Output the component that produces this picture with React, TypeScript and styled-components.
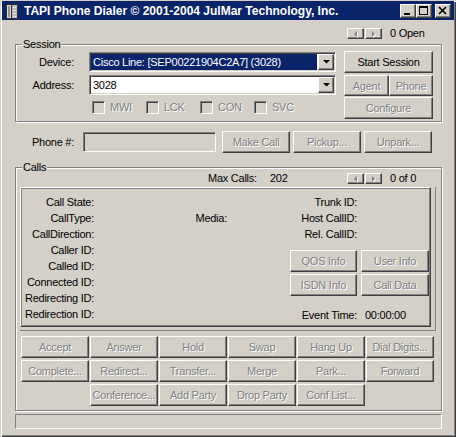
import React from "react";
import styled, { createGlobalStyle, css } from "styled-components";

const FACE = "#D4D0C8";

const GlobalStyle = createGlobalStyle`
  html, body { margin: 0; padding: 0; background: ${FACE}; }
  body {
    font-family: "Liberation Sans", Arial, sans-serif;
    font-size: 11px;
    letter-spacing: -0.25px;
    color: #000;
  }
  *, *::before, *::after { box-sizing: border-box; }
`;

const raised = css`
  background: ${FACE};
  border: 1px solid;
  border-color: #fff #404040 #404040 #fff;
  box-shadow: inset -1px -1px 0 #808080;
`;

const sunken = css`
  border: 1px solid;
  border-color: #808080 #fff #fff #808080;
  box-shadow: inset 1px 1px 0 #404040, inset -1px -1px 0 ${FACE};
`;

const disabledText = css`
  color: #808080;
  text-shadow: 1px 1px 0 #fff;
`;

const Window = styled.div`
  width: 456px;
  height: 437px;
  background: ${FACE};
  padding: 1px 2px 2px 2px;
  box-shadow: inset 1px 1px 0 ${FACE}, inset 2px 2px 0 #fff,
    inset -1px -1px 0 #404040, inset -2px -2px 0 #808080;
  display: flex;
  flex-direction: column;
  overflow: hidden;
`;

const TitleBar = styled.div`
  flex: none;
  height: 19px;
  background: #0a246a;
  color: #fff;
  display: flex;
  align-items: center;
  padding: 0 3px 0 2px;
`;

const TitleText = styled.span`
  flex: 1;
  margin-left: 4px;
  font-weight: bold;
  font-size: 12px;
  letter-spacing: 0;
  white-space: nowrap;
  overflow: hidden;
`;

const CaptionButton = styled.div<{ $gap?: number }>`
  ${raised};
  width: 16px;
  height: 14px;
  margin-left: ${(p) => p.$gap ?? 0}px;
  display: flex;
  align-items: center;
  justify-content: center;
`;

const Content = styled.div`
  display: flex;
  flex-direction: column;
  padding: 0 12px 0 13px;
`;

const NavRow = styled.div`
  height: 11px;
  margin-top: 8px;
  padding-left: 332px;
  display: flex;
`;

const NavCluster = styled.div`
  display: flex;
  align-items: center;
  height: 11px;
`;

const NavArrow = styled.div`
  ${raised};
  width: 17px;
  height: 11px;
  display: flex;
  align-items: center;
  justify-content: center;
  & + & {
    margin-left: 1px;
  }
`;

const NavText = styled.span`
  margin-left: 8px;
  line-height: 11px;
  white-space: nowrap;
`;

const GroupBox = styled.div<{ $h: number; $mt: number }>`
  position: relative;
  flex: none;
  height: ${(p) => p.$h}px;
  margin-top: ${(p) => p.$mt}px;
  border: 1px solid #808080;
  box-shadow: inset 1px 1px 0 #fff, 1px 1px 0 #fff;
`;

const Legend = styled.span`
  position: absolute;
  top: -7px;
  left: 6px;
  padding: 0 1px;
  line-height: 13px;
  background: ${FACE};
`;

const SessionBody = styled.div`
  display: flex;
  padding-top: 6px;
`;

const LeftBlock = styled.div`
  display: flex;
  flex-direction: column;
`;

const RightBlock = styled.div`
  display: flex;
  flex-direction: column;
  width: 89px;
  margin-left: 8px;
`;

const FieldRow = styled.div<{ $mt?: number }>`
  display: flex;
  align-items: center;
  height: 22px;
  margin-top: ${(p) => p.$mt ?? 0}px;
`;

const FieldLabel = styled.span<{ $w: number; $mr: number }>`
  flex: none;
  width: ${(p) => p.$w}px;
  margin-right: ${(p) => p.$mr}px;
  text-align: right;
  white-space: nowrap;
`;

const Combo = styled.div`
  ${sunken};
  background: #fff;
  width: 247px;
  height: 20px;
  padding: 1px;
  display: flex;
`;

const ComboText = styled.div<{ $selected?: boolean }>`
  flex: 1;
  margin-right: 1px;
  padding-left: 2px;
  line-height: 16px;
  white-space: nowrap;
  overflow: hidden;
  background: ${(p) => (p.$selected ? "#0a246a" : "#fff")};
  color: ${(p) => (p.$selected ? "#fff" : "#000")};
`;

const DropButton = styled.div`
  ${raised};
  width: 16px;
  height: 16px;
  flex: none;
  display: flex;
  align-items: center;
  justify-content: center;
`;

const CheckRow = styled.div`
  display: flex;
  height: 13px;
  margin-top: 5px;
  padding-left: 76px;
`;

const CheckItem = styled.div`
  width: 54px;
  display: flex;
  align-items: center;
  gap: 5px;
`;

const CheckBox = styled.span`
  ${sunken};
  width: 13px;
  height: 13px;
  flex: none;
  background: ${FACE};
`;

const DimText = styled.span`
  ${disabledText};
  line-height: 13px;
`;

const PushButton = styled.button<{ $w?: number; $h?: number }>`
  ${raised};
  width: ${(p) => (p.$w ? `${p.$w}px` : "100%")};
  height: ${(p) => p.$h ?? 22}px;
  flex: none;
  padding: 0;
  margin: 0;
  font: inherit;
  letter-spacing: inherit;
  color: #000;
  display: flex;
  align-items: center;
  justify-content: center;
  white-space: nowrap;
  outline: none;
  appearance: none;
  &:disabled {
    ${disabledText};
  }
`;

const ButtonPair = styled.div`
  display: flex;
  margin-top: 2px;
`;

const PhoneRow = styled.div`
  display: flex;
  align-items: center;
  height: 22px;
  margin-top: 9px;
  gap: 3px;
`;

const PhoneInput = styled.div`
  ${sunken};
  background: ${FACE};
  width: 133px;
  height: 20px;
  margin-right: 3px;
  flex: none;
`;

const CallsHeader = styled.div`
  display: grid;
  grid-template-columns: 192px 62px 77px auto;
  height: 11px;
  margin-top: 5px;
  line-height: 11px;
`;

const PanelFrame = styled.div`
  margin: 3px 0 0 4px;
  width: 416px;
  height: 144px;
  padding: 0 4px 3px 0;
  border-right: 1px solid #808080;
  border-bottom: 1px solid #808080;
  display: flex;
`;

const Panel = styled.div`
  flex: 1;
  border: 1px solid;
  border-color: #fff #404040 #404040 #fff;
  box-shadow: inset 1px 1px 0 #808080, inset -1px -1px 0 #808080;
  display: flex;
  padding: 6px 0 0 1px;
  line-height: 16px;
`;

const LabelColumn = styled.div<{ $w: number }>`
  width: ${(p) => p.$w}px;
  flex: none;
  display: flex;
  flex-direction: column;
  text-align: right;
  white-space: nowrap;
`;

const Spacer = styled.div`
  height: 16px;
`;

const RightColumn = styled.div`
  flex: 1;
  display: flex;
  flex-direction: column;
`;

const InfoRow = styled.div<{ $mt?: number }>`
  display: grid;
  grid-template-columns: 130px 1fr;
  column-gap: 8px;
  height: 16px;
  margin-top: ${(p) => p.$mt ?? 0}px;
  white-space: nowrap;
`;

const InfoLabel = styled.span`
  text-align: right;
`;

const InfoButtons = styled.div`
  display: grid;
  grid-template-columns: 67px 68px;
  grid-auto-rows: 22px;
  column-gap: 4px;
  row-gap: 2px;
  margin: 8px 0 0 63px;
`;

const ActionGrid = styled.div`
  display: grid;
  grid-template-columns: repeat(6, 68px);
  grid-auto-rows: 22px;
  column-gap: 1px;
  row-gap: 2px;
  margin: 5px 0 0 5px;
`;

const GridCell = styled.div<{ $col?: number }>`
  display: flex;
  ${(p) => (p.$col ? `grid-column-start: ${p.$col};` : "")}
`;

const StatusBar = styled.div`
  flex: none;
  width: 427px;
  height: 15px;
  margin-top: 3px;
  border: 1px solid;
  border-color: #808080 #fff #fff #808080;
`;

const PhoneIcon = () => (
  <svg width="16" height="16" viewBox="0 0 16 16">
    <rect x="2" y="1" width="12" height="15" fill="#303030" />
    <rect x="3" y="2" width="4" height="13" fill="#d8d8d8" />
    <rect x="4" y="3" width="2" height="11" fill="#909090" />
    <rect x="8" y="2" width="5" height="13" fill="#b8b8b8" />
    {[4, 7, 10, 13].map((y) =>
      [9, 11].map((x) => (
        <rect key={`${x}-${y}`} x={x} y={y} width="1" height="1" fill="#fff" />
      ))
    )}
  </svg>
);

const MinGlyph = () => (
  <svg width="14" height="12" viewBox="0 0 14 12">
    <rect x="3" y="8" width="6" height="2" fill="#000" />
  </svg>
);

const MaxGlyph = () => (
  <svg width="14" height="12" viewBox="0 0 14 12">
    <rect x="2.5" y="1.5" width="8" height="8" fill="none" stroke="#000" />
    <rect x="2" y="1" width="9" height="2" fill="#000" />
  </svg>
);

const CloseGlyph = () => (
  <svg width="14" height="12" viewBox="0 0 14 12">
    <path d="M3 2 L10 9 M10 2 L3 9" stroke="#000" strokeWidth="1.7" />
  </svg>
);

const DropGlyph = () => (
  <svg width="7" height="4" viewBox="0 0 7 4">
    <path d="M0 0 H7 L3.5 3.5 Z" fill="#000" />
  </svg>
);

const ArrowGlyph = ({ dir }: { dir: "left" | "right" }) => {
  const d = dir === "left" ? "M3 0 V6 L0 3 Z" : "M0 0 V6 L3 3 Z";
  return (
    <svg width="5" height="8" viewBox="0 0 5 8">
      <path d={d} transform="translate(2 2)" fill="#fff" />
      <path d={d} transform="translate(1 1)" fill="#808080" />
    </svg>
  );
};

const Nav = ({ text }: { text: string }) => (
  <NavCluster>
    <NavArrow>
      <ArrowGlyph dir="left" />
    </NavArrow>
    <NavArrow>
      <ArrowGlyph dir="right" />
    </NavArrow>
    <NavText>{text}</NavText>
  </NavCluster>
);

const checks = ["MWI", "LCK", "CON", "SVC"];

const leftLabels = [
  "Call State:",
  "CallType:",
  "CallDirection:",
  "Caller ID:",
  "Called ID:",
  "Connected ID:",
  "Redirecting ID:",
  "Redirection ID:",
];

const actionRows: { label: string; col?: number }[] = [
  { label: "Accept" },
  { label: "Answer" },
  { label: "Hold" },
  { label: "Swap" },
  { label: "Hang Up" },
  { label: "Dial Digits..." },
  { label: "Complete..." },
  { label: "Redirect..." },
  { label: "Transfer..." },
  { label: "Merge" },
  { label: "Park..." },
  { label: "Forward" },
  { label: "Conference...", col: 2 },
  { label: "Add Party" },
  { label: "Drop Party" },
  { label: "Conf List..." },
];

export default function App() {
  return (
    <>
      <GlobalStyle />
      <Window>
        <TitleBar>
          <PhoneIcon />
          <TitleText>TAPI Phone Dialer © 2001-2004 JulMar Technology, Inc.</TitleText>
          <CaptionButton>
            <MinGlyph />
          </CaptionButton>
          <CaptionButton>
            <MaxGlyph />
          </CaptionButton>
          <CaptionButton $gap={3}>
            <CloseGlyph />
          </CaptionButton>
        </TitleBar>

        <Content>
          <NavRow>
            <Nav text="0 Open" />
          </NavRow>

          <GroupBox $h={78} $mt={5}>
            <Legend>Session</Legend>
            <SessionBody>
              <LeftBlock>
                <FieldRow>
                  <FieldLabel $w={58} $mr={15}>Device:</FieldLabel>
                  <Combo>
                    <ComboText $selected>Cisco Line: [SEP00221904C2A7] (3028)</ComboText>
                    <DropButton>
                      <DropGlyph />
                    </DropButton>
                  </Combo>
                </FieldRow>
                <FieldRow $mt={1}>
                  <FieldLabel $w={58} $mr={15}>Address:</FieldLabel>
                  <Combo>
                    <ComboText>3028</ComboText>
                    <DropButton>
                      <DropGlyph />
                    </DropButton>
                  </Combo>
                </FieldRow>
                <CheckRow>
                  {checks.map((c) => (
                    <CheckItem key={c}>
                      <CheckBox />
                      <DimText>{c}</DimText>
                    </CheckItem>
                  ))}
                </CheckRow>
              </LeftBlock>
              <RightBlock>
                <PushButton>Start Session</PushButton>
                <ButtonPair>
                  <PushButton $w={45} $h={21} disabled>
                    Agent
                  </PushButton>
                  <PushButton $w={44} $h={21} disabled>
                    Phone
                  </PushButton>
                </ButtonPair>
                <FieldRow $mt={1}>
                  <PushButton disabled>Configure</PushButton>
                </FieldRow>
              </RightBlock>
            </SessionBody>
          </GroupBox>

          <PhoneRow>
            <FieldLabel $w={59} $mr={6}>Phone #:</FieldLabel>
            <PhoneInput />
            <PushButton $w={68} disabled>
              Make Call
            </PushButton>
            <PushButton $w={68} disabled>
              Pickup...
            </PushButton>
            <PushButton $w={68} disabled>
              Unpark...
            </PushButton>
          </PhoneRow>

          <GroupBox $h={244} $mt={14}>
            <Legend>Calls</Legend>
            <CallsHeader>
              <span />
              <span>Max Calls:</span>
              <span>202</span>
              <Nav text="0 of 0" />
            </CallsHeader>

            <PanelFrame>
              <Panel>
                <LabelColumn $w={72}>
                  {leftLabels.map((l) => (
                    <span key={l}>{l}</span>
                  ))}
                </LabelColumn>
                <LabelColumn $w={133}>
                  <Spacer />
                  <span>Media:</span>
                </LabelColumn>
                <RightColumn>
                  <InfoRow>
                    <InfoLabel>Trunk ID:</InfoLabel>
                    <span />
                  </InfoRow>
                  <InfoRow>
                    <InfoLabel>Host CallID:</InfoLabel>
                    <span />
                  </InfoRow>
                  <InfoRow>
                    <InfoLabel>Rel. CallID:</InfoLabel>
                    <span />
                  </InfoRow>
                  <InfoButtons>
                    <PushButton disabled>QOS Info</PushButton>
                    <PushButton disabled>User Info</PushButton>
                    <PushButton disabled>ISDN Info</PushButton>
                    <PushButton disabled>Call Data</PushButton>
                  </InfoButtons>
                  <InfoRow $mt={11}>
                    <InfoLabel>Event Time:</InfoLabel>
                    <span>00:00:00</span>
                  </InfoRow>
                </RightColumn>
              </Panel>
            </PanelFrame>

            <ActionGrid>
              {actionRows.map((a) => (
                <GridCell key={a.label} $col={a.col}>
                  <PushButton disabled>{a.label}</PushButton>
                </GridCell>
              ))}
            </ActionGrid>
          </GroupBox>

          <StatusBar />
        </Content>
      </Window>
    </>
  );
}
